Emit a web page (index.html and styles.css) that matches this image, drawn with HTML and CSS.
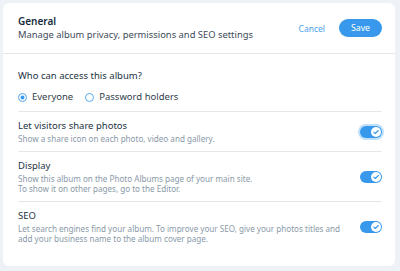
FILE: index.html
```html
<!DOCTYPE html>
<html lang="en">
<head>
  <meta charset="UTF-8" />
  <title>General settings</title>
  <link rel="stylesheet" href="styles.css">
</head>
<body>
  <div class="card">
    <div class="header">
      <div class="header-text">
        <div class="title">General</div>
        <div class="subtitle">Manage album privacy, permissions and SEO settings</div>
      </div>
      <div class="actions">
        <button class="link-btn">Cancel</button>
        <button class="save-btn">Save</button>
      </div>
    </div>

    <div class="content">
      <div class="section access">
        <div class="label">Who can access this album?</div>
        <div class="radios">
          <label class="radio checked"><span class="dot"></span>Everyone</label>
          <label class="radio"><span class="dot"></span>Password holders</label>
        </div>
      </div>

      <div class="section row">
        <div class="row-text">
          <div class="label">Let visitors share photos</div>
          <div class="hint">Show a share icon on each photo, video and gallery.</div>
        </div>
        <span class="toggle focus"><span class="knob"><svg viewBox="0 0 8 8" width="8" height="8"><path d="M1.8 4.1l1.5 1.4 3-3" fill="none" stroke="#3899ec" stroke-width="1.1" stroke-linecap="round" stroke-linejoin="round"/></svg></span></span>
      </div>

      <div class="section row">
        <div class="row-text">
          <div class="label">Display</div>
          <div class="hint">Show this album on the Photo Albums page of your main site.<br>To show it on other pages, go to the Editor.</div>
        </div>
        <span class="toggle"><span class="knob"><svg viewBox="0 0 8 8" width="8" height="8"><path d="M1.8 4.1l1.5 1.4 3-3" fill="none" stroke="#3899ec" stroke-width="1.1" stroke-linecap="round" stroke-linejoin="round"/></svg></span></span>
      </div>

      <div class="section row last">
        <div class="row-text">
          <div class="label">SEO</div>
          <div class="hint">Let search engines find your album. To improve your SEO, give your photos titles and add your business name to the album cover page.</div>
        </div>
        <span class="toggle"><span class="knob"><svg viewBox="0 0 8 8" width="8" height="8"><path d="M1.8 4.1l1.5 1.4 3-3" fill="none" stroke="#3899ec" stroke-width="1.1" stroke-linecap="round" stroke-linejoin="round"/></svg></span></span>
      </div>
    </div>
  </div>
</body>
</html>
```

FILE: styles.css
```css
body {
  margin: 0;
  padding: 3px 5px 5px 3px;
  background: #eef2f6;
  font-family: 'Noto Sans', sans-serif;
  color: #162d3d;
}

.card {
  background: #fff;
  border-radius: 6px;
  height: 263px;
  box-sizing: border-box;
}

.header {
  display: flex;
  justify-content: space-between;
  align-items: flex-start;
  padding: 12px 13px 0 15px;
  height: 51px;
  box-sizing: border-box;
  border-bottom: 1px solid #e3e8ec;
}

.title {
  font-size: 10px;
  font-weight: 600;
  line-height: 13px;
  color: #162d3d;
}

.subtitle {
  font-size: 9.4px;
  line-height: 14px;
  color: #3b4a57;
}

.actions {
  display: flex;
  align-items: center;
  gap: 14px;
  margin-top: 4px;
}

.link-btn {
  border: none;
  background: none;
  padding: 0;
  font-family: inherit;
  font-size: 8.5px;
  color: #4a9fec;
}

.save-btn {
  border: none;
  background: #3899ec;
  color: #fff;
  font-family: inherit;
  font-size: 8.8px;
  width: 43px;
  height: 18px;
  border-radius: 9px;
  padding: 0;
}

.content {
  padding: 0 13px 0 15px;
}

.section {
  border-bottom: 1px solid #e3e8ec;
}

.section.last {
  border-bottom: none;
}

.access {
  padding: 15px 0 7px;
}

.label {
  font-size: 9.5px;
  line-height: 14px;
  color: #22323f;
}

.radios {
  display: flex;
  gap: 12px;
  margin-top: 7px;
}

.radio {
  display: flex;
  align-items: center;
  gap: 5px;
  font-size: 9.5px;
  line-height: 14px;
  color: #32404c;
}

.dot {
  width: 9px;
  height: 9px;
  border: 1px solid #5aa9ee;
  border-radius: 50%;
  box-sizing: border-box;
}

.radio.checked .dot {
  background: #3899ec;
  box-shadow: inset 0 0 0 1.5px #fff;
  border-color: #7dbcf2;
}

.row {
  display: flex;
  justify-content: space-between;
  align-items: center;
  padding: 7px 0 7px;
}

.row .label {
  margin-bottom: 1px;
}

.row-text {
  max-width: 330px;
}

.hint {
  font-size: 8.1px;
  line-height: 10px;
  color: #8a9aa8;
}

.toggle {
  flex: none;
  width: 22px;
  height: 12px;
  border-radius: 6px;
  background: #3899ec;
  display: flex;
  align-items: center;
  justify-content: flex-end;
  padding: 0 1px;
  box-sizing: border-box;
}

.toggle.focus {
  box-shadow: 0 0 0 2px #bfe0fb;
}

.knob {
  width: 10px;
  height: 10px;
  border-radius: 50%;
  background: #fff;
  display: flex;
  align-items: center;
  justify-content: center;
}
```
